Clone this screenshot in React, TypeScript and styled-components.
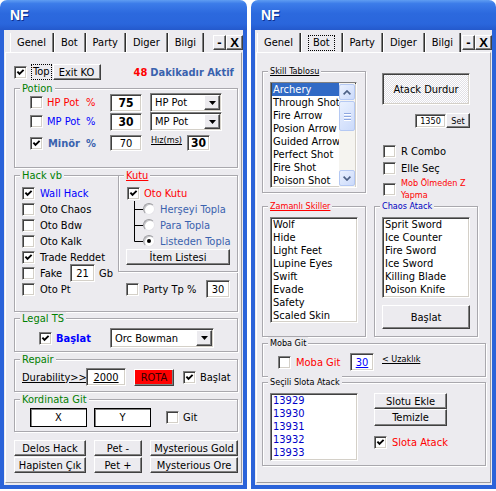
import styled, { createGlobalStyle } from "styled-components";

const FACE = "#ECEBEF";
const SANS = `"DejaVu Sans Condensed", "DejaVu Sans", "Liberation Sans", sans-serif`;

const GlobalStyle = createGlobalStyle`
  html, body { margin: 0; padding: 0; background: #fff; }
  body {
    font-family: ${SANS};
    font-stretch: condensed;
    font-size: 11px;
    color: #000;
  }
  *, *::before, *::after { box-sizing: border-box; }
`;

const Screen = styled.div`
  display: flex;
  gap: 4px;
  width: 496px;
  height: 491px;
`;

const Window = styled.div<{ $w: number }>`
  display: flex;
  flex-direction: column;
  width: ${(p) => p.$w}px;
  height: 489px;
`;

const TitleBar = styled.div`
  flex: none;
  height: 30px;
  display: flex;
  align-items: center;
  padding-left: 10px;
  border-radius: 7px 7px 0 0;
  background: linear-gradient(
    180deg,
    #5f9df2 0%,
    #3c7ce9 12%,
    #2c69de 45%,
    #2a66dc 80%,
    #2459cc 100%
  );
  color: #fff;
  font: bold 14px "Liberation Sans", Arial, sans-serif;
  text-shadow: 1px 1px 0 #10308c;
`;

const Body = styled.div`
  flex: 1;
  display: flex;
  flex-direction: column;
  background: ${FACE};
  border: 4px solid #2b63d9;
  border-top: 0;
`;

const TabStrip = styled.div<{ $lead: number }>`
  flex: none;
  display: flex;
  height: 19px;
  margin-top: 3px;
  padding-left: ${(p) => p.$lead}px;
`;

const Tab = styled.div`
  display: flex;
  align-items: center;
  padding: 0 7px 0 6px;
  border-left: 1px solid #fff;
  border-right: 1px solid #303030;
  box-shadow: inset -1px 0 0 #808080;
`;

const Focus = styled.span<{ $ml?: number; $pad?: number }>`
  flex: none;
  margin-left: ${(p) => p.$ml ?? 0}px;
  padding: 0 ${(p) => p.$pad ?? 1}px;
  line-height: 14px;
  border: 1px dotted #000;
`;

const WinButtons = styled.div`
  display: flex;
  height: 15px;
  margin: 2px 0 0 auto;
`;

const WinButton = styled.div<{ $w: number }>`
  width: ${(p) => p.$w}px;
  height: 15px;
  display: flex;
  align-items: center;
  justify-content: center;
  background: ${FACE};
  border: 1px solid;
  border-color: #fff #404040 #404040 #fff;
  box-shadow: inset -1px -1px 0 #808080;
  font: bold 13px "Liberation Sans", Arial, sans-serif;
`;

const Panel = styled.div<{ $pl: number; $pr: number }>`
  flex: 1;
  display: flex;
  flex-direction: column;
  margin: 0 1px 2px;
  padding: 0 ${(p) => p.$pr}px 0 ${(p) => p.$pl}px;
  border: 1px solid;
  border-color: #fff #9c9ba0 #9c9ba0 #fff;
`;

const Frame = styled.div<{ $h: number; $mt: number }>`
  flex: none;
  display: flex;
  flex-direction: column;
  height: ${(p) => p.$h}px;
  margin-top: ${(p) => p.$mt}px;
  border: 1px solid #a9a8ad;
  box-shadow: inset 1px 1px 0 #fff, 1px 1px 0 #fff;
`;

const HackFrame = styled(Frame)`
  display: grid;
  grid-template-columns: 1fr 119px;
  align-items: start;
`;

const HackList = styled.div`
  display: flex;
  flex-direction: column;
`;

const HackSide = styled.div`
  display: flex;
  flex-direction: column;
  margin: -1px -1px 0 0;
`;

const Legend = styled.span<{ $c?: string; $u?: boolean; $s?: number }>`
  align-self: flex-start;
  height: 13px;
  margin: -7px 0 0 5px;
  padding: 0 2px;
  line-height: 13px;
  font-size: ${(p) => p.$s ?? 11}px;
  color: ${(p) => p.$c ?? "#000"};
  text-decoration: ${(p) => (p.$u ? "underline" : "none")};
  background: ${FACE};
  white-space: nowrap;
`;

const Row = styled.div<{ $h: number; $mt?: number; $pl?: number; $pr?: number; $end?: boolean }>`
  flex: none;
  display: flex;
  align-items: center;
  justify-content: ${(p) => (p.$end ? "flex-end" : "flex-start")};
  height: ${(p) => p.$h}px;
  margin-top: ${(p) => p.$mt ?? 0}px;
  padding-left: ${(p) => p.$pl ?? 0}px;
  padding-right: ${(p) => p.$pr ?? 0}px;
`;

const Caption = styled.span<{
  $c?: string;
  $b?: boolean;
  $u?: boolean;
  $s?: number;
  $w?: number;
  $ml?: number;
  $top?: boolean;
  $lh?: number;
}>`
  flex: none;
  align-self: ${(p) => (p.$top ? "flex-start" : "center")};
  width: ${(p) => (p.$w ? `${p.$w}px` : "auto")};
  margin-left: ${(p) => p.$ml ?? 0}px;
  line-height: ${(p) => p.$lh ?? 13}px;
  font-size: ${(p) => p.$s ?? 11}px;
  font-weight: ${(p) => (p.$b ? "bold" : "normal")};
  color: ${(p) => p.$c ?? "#000"};
  text-decoration: ${(p) => (p.$u ? "underline" : "none")};
  white-space: nowrap;
`;

const Spacer = styled.span`
  flex: 1;
`;

const Sunken = `
  background: #fff;
  border: 1px solid;
  border-color: #808080 #fff #fff #808080;
  box-shadow: inset 1px 1px 0 #404040, inset -1px -1px 0 #d4d0c8;
`;

const Field = styled.div<{
  $w: number;
  $h: number;
  $ml?: number;
  $mr?: number;
  $b?: boolean;
  $u?: boolean;
  $c?: string;
  $s?: number;
}>`
  flex: none;
  display: flex;
  align-items: center;
  justify-content: center;
  width: ${(p) => p.$w}px;
  height: ${(p) => p.$h}px;
  margin-left: ${(p) => p.$ml ?? 0}px;
  margin-right: ${(p) => p.$mr ?? 0}px;
  ${Sunken}
  font-size: ${(p) => p.$s ?? (p.$b ? 12 : 11)}px;
  font-weight: ${(p) => (p.$b ? "bold" : "normal")};
  color: ${(p) => p.$c ?? "#000"};
  text-decoration: ${(p) => (p.$u ? "underline" : "none")};
`;

const CoordBox = styled.div<{ $ml?: number }>`
  flex: none;
  display: flex;
  align-items: center;
  justify-content: center;
  width: 57px;
  height: 19px;
  margin-left: ${(p) => p.$ml ?? 0}px;
  background: #fff;
  border: 1px solid #000;
  box-shadow: inset 1px 1px 0 #808080;
`;

const ComboBox = styled.div<{ $w: number; $h: number; $ml?: number }>`
  flex: none;
  display: flex;
  width: ${(p) => p.$w}px;
  height: ${(p) => p.$h}px;
  margin-left: ${(p) => p.$ml ?? 0}px;
  ${Sunken}
`;

const ComboText = styled.span`
  flex: 1;
  display: flex;
  align-items: center;
  padding-left: 4px;
`;

const DropButton = styled.span`
  flex: none;
  display: flex;
  align-items: center;
  justify-content: center;
  width: 16px;
  margin: 1px;
  background: ${FACE};
  border: 1px solid;
  border-color: #fff #404040 #404040 #fff;
  box-shadow: inset -1px -1px 0 #808080;
`;

const Btn = styled.button<{
  $w: number;
  $h: number;
  $ml?: number;
  $mt?: number;
  $bg?: string;
  $c?: string;
  $s?: number;
}>`
  flex: none;
  display: flex;
  align-items: center;
  justify-content: center;
  width: ${(p) => p.$w}px;
  height: ${(p) => p.$h}px;
  margin: ${(p) => p.$mt ?? 0}px 0 0 ${(p) => p.$ml ?? 0}px;
  padding: 0;
  font-family: inherit;
  font-stretch: condensed;
  font-size: ${(p) => p.$s ?? 11}px;
  color: ${(p) => p.$c ?? "#000"};
  background: ${(p) => p.$bg ?? FACE};
  border: 1px solid;
  border-color: #fff #404040 #404040 #fff;
  box-shadow: inset -1px -1px 0 #808080;
  white-space: nowrap;
`;

const ToggleBtn = styled.div`
  flex: none;
  display: flex;
  align-items: center;
  justify-content: center;
  width: 88px;
  height: 32px;
  margin: 20px 0 0 8px;
  border: 1px solid;
  border-color: #808080 #fff #fff #808080;
  box-shadow: inset 1px 1px 0 #404040, inset -1px -1px 0 #d4d0c8;
  background: repeating-conic-gradient(#fff 0% 25%, #e1e0e6 0% 50%) 0 0 / 2px 2px;
`;

const ButtonGrid = styled.div`
  display: grid;
  grid-template-columns: 72px 48px 88px;
  grid-auto-rows: 16px;
  column-gap: 8px;
  row-gap: 1px;
  margin-top: 8px;
`;

const CheckBox = styled.span<{ $ml?: number }>`
  flex: none;
  display: flex;
  align-items: center;
  justify-content: center;
  width: 13px;
  height: 13px;
  margin-left: ${(p) => p.$ml ?? 0}px;
  ${Sunken}
`;

const Check = ({ on, ml }: { on?: boolean; ml?: number }) => (
  <CheckBox $ml={ml}>
    {on && (
      <svg width="9" height="9" viewBox="0 0 9 9">
        <path d="M1.4 3.6 L3.5 5.9 L7.6 1.8" fill="none" stroke="#000" strokeWidth="1.9" />
      </svg>
    )}
  </CheckBox>
);

const RadioDot = styled.span<{ $on?: boolean }>`
  flex: none;
  display: flex;
  align-items: center;
  justify-content: center;
  width: 12px;
  height: 12px;
  border-radius: 50%;
  background: #fff;
  border: 1px solid;
  border-color: #9a9a9e #e6e5ea #e6e5ea #9a9a9e;
  box-shadow: inset 1px 1px 0 #c4c4c8;
  &::after {
    content: "";
    width: 4px;
    height: 4px;
    border-radius: 50%;
    background: ${(p) => (p.$on ? "#000" : "transparent")};
  }
`;

const TreeLink = ({ last }: { last?: boolean }) => (
  <svg width="16" height="16" viewBox="0 0 16 16" style={{ flex: "none" }}>
    <path
      d={last ? "M7.5 0 V8.5 H16" : "M7.5 0 V16 M7.5 8.5 H16"}
      fill="none"
      stroke="#000"
      strokeWidth="1"
    />
  </svg>
);

const ListBox = styled.div<{ $w: number; $h: number; $mt?: number; $ml?: number }>`
  flex: none;
  display: flex;
  width: ${(p) => p.$w}px;
  height: ${(p) => p.$h}px;
  margin-top: ${(p) => p.$mt ?? 0}px;
  margin-left: ${(p) => p.$ml ?? 0}px;
  padding: 0 1px 0 1px;
  ${Sunken}
`;

const ListItems = styled.div`
  flex: 1;
  display: flex;
  flex-direction: column;
  overflow: hidden;
`;

const ListItem = styled.div<{ $sel?: boolean; $c?: string }>`
  flex: none;
  height: 13px;
  padding-left: 1px;
  line-height: 13px;
  white-space: nowrap;
  color: ${(p) => (p.$sel ? "#fff" : p.$c ?? "#000")};
  background: ${(p) => (p.$sel ? "#316ac5" : "transparent")};
`;

const ScrollBar = styled.div`
  flex: none;
  display: flex;
  flex-direction: column;
  width: 16px;
  padding: 1px 0;
  background: #f5f4f0;
`;

const ScrollPart = styled.div<{ $h: number; $mt?: number }>`
  flex: none;
  display: flex;
  flex-direction: column;
  align-items: center;
  justify-content: center;
  gap: 2px;
  height: ${(p) => p.$h}px;
  margin-top: ${(p) => p.$mt ?? 0}px;
  border: 1px solid #b5c9f3;
  border-radius: 2px;
  background: linear-gradient(135deg, #eaf1fe 0%, #cbdafb 100%);
`;

const Grip = styled.span`
  width: 7px;
  height: 1px;
  background: #8fa8e0;
  box-shadow: 0 1px 0 #fff;
`;

const Chevron = ({ down }: { down?: boolean }) => (
  <svg width="8" height="5" viewBox="0 0 8 5">
    <path
      d={down ? "M0.6 0.6 L4 4 L7.4 0.6" : "M0.6 4.4 L4 1 L7.4 4.4"}
      fill="none"
      stroke="#4d6185"
      strokeWidth="1.7"
    />
  </svg>
);

const DropArrow = () => (
  <svg width="7" height="4" viewBox="0 0 7 4">
    <path d="M0 0 H7 L3.5 4 Z" fill="#000" />
  </svg>
);

const Combo = ({ w, h, ml, text }: { w: number; h: number; ml?: number; text: string }) => (
  <ComboBox $w={w} $h={h} $ml={ml}>
    <ComboText>{text}</ComboText>
    <DropButton>
      <DropArrow />
    </DropButton>
  </ComboBox>
);

const TopArea = styled.div`
  flex: none;
  display: flex;
  gap: 8px;
  align-items: flex-start;
`;

const Column = styled.div`
  flex: none;
  display: flex;
  flex-direction: column;
  width: 104px;
`;

const SlotRow = styled.div`
  display: flex;
  align-items: flex-start;
  margin-top: 4px;
  padding-left: 7px;
`;

const SlotSide = styled.div`
  display: flex;
  flex-direction: column;
  margin-left: 16px;
`;

const STEEL = "#3a62ae";

const hackItems: { label: string; on?: boolean; color?: string }[] = [
  { label: "Wall Hack", on: true, color: "#0000ff" },
  { label: "Oto Chaos" },
  { label: "Oto Bdw" },
  { label: "Oto Kalk" },
  { label: "Trade Reddet", on: true },
];

const collect = ["Herşeyi Topla", "Para Topla", "Listeden Topla"];

const skills = [
  "Archery",
  "Through Shot",
  "Fire Arrow",
  "Posion Arrow",
  "Guided Arrow",
  "Perfect Shot",
  "Fire Shot",
  "Poison Shot",
];

const timed = ["Wolf", "Hide", "Light Feet", "Lupine Eyes", "Swift", "Evade", "Safety", "Scaled Skin"];

const chaos = ["Sprit Sword", "Ice Counter", "Fire Sword", "Ice Sword", "Killing Blade", "Poison Knife"];

const slots = ["13929", "13930", "13931", "13932", "13933"];

const Tabs = ({ lead, active }: { lead: number; active: string }) => (
  <TabStrip $lead={lead}>
    {["Genel", "Bot", "Party", "Diger", "Bilgi"].map((t) => (
      <Tab key={t}>{t === active && t !== "Genel" ? <Focus $pad={4}>{t}</Focus> : t}</Tab>
    ))}
    <WinButtons>
      <WinButton $w={13}>-</WinButton>
      <WinButton $w={17}>X</WinButton>
    </WinButtons>
  </TabStrip>
);

const GenelWindow = () => (
  <Window $w={247}>
    <TitleBar>NF</TitleBar>
    <Body>
      <Tabs lead={6} active="Genel" />
      <Panel $pl={8} $pr={3}>
        <Row $h={16} $mt={11}>
          <Check on />
          <Focus $ml={4}>Top</Focus>
          <Btn $w={48} $h={16} $ml={1}>
            Exit KO
          </Btn>
          <Caption $c="#f00" $b $ml={33}>
            48
          </Caption>
          <Caption $c={STEEL} $b $ml={3}>
            Dakikadır Aktif
          </Caption>
        </Row>

        <Frame $h={80} $mt={8}>
          <Legend $c="#008000">Potion</Legend>
          <Row $h={19} $mt={-2} $pl={15}>
            <Check />
            <Caption $c="#f00" $ml={4} $w={39}>
              HP Pot
            </Caption>
            <Caption $c="#f00" $w={24}>
              %
            </Caption>
            <Field $w={32} $h={18} $b>
              75
            </Field>
            <Combo w={72} h={19} ml={8} text="HP Pot" />
          </Row>
          <Row $h={19} $pl={15}>
            <Check />
            <Caption $c="#0000ff" $ml={4} $w={39}>
              MP Pot
            </Caption>
            <Caption $c="#0000ff" $w={24}>
              %
            </Caption>
            <Field $w={32} $h={18} $b>
              30
            </Field>
            <Combo w={72} h={19} ml={8} text="MP Pot" />
          </Row>
          <Row $h={16} $mt={4} $pl={15}>
            <Check on />
            <Caption $c={STEEL} $b $ml={5} $w={38}>
              Minör
            </Caption>
            <Caption $c={STEEL} $b $w={24}>
              %
            </Caption>
            <Field $w={32} $h={16}>
              70
            </Field>
            <Caption $s={9} $u $ml={9} $top $lh={11}>
              Hız(ms)
            </Caption>
            <Field $w={23} $h={16} $ml={5} $b>
              30
            </Field>
          </Row>
        </Frame>

        <HackFrame $h={137} $mt={7}>
          <HackList>
            <Legend $c="#008000">Hack vb</Legend>
            <Row $h={16} $mt={3} $pl={7}>
              <Check on={hackItems[0].on} />
              <Caption $c={hackItems[0].color} $ml={5}>
                {hackItems[0].label}
              </Caption>
            </Row>
            {hackItems.slice(1).map((it) => (
              <Row key={it.label} $h={16} $pl={7}>
                <Check on={it.on} />
                <Caption $c={it.color} $ml={5}>
                  {it.label}
                </Caption>
              </Row>
            ))}
            <Row $h={16} $pl={7}>
              <Check />
              <Caption $ml={5} $w={30}>
                Fake
              </Caption>
              <Field $w={25} $h={18}>
                21
              </Field>
              <Caption $ml={4}>Gb</Caption>
            </Row>
            <Row $h={16} $pl={7}>
              <Check />
              <Caption $ml={5}>Oto Pt</Caption>
            </Row>
          </HackList>
          <HackSide>
            <Frame $h={97} $mt={0}>
              <Legend $c="#f00" $u>
                Kutu
              </Legend>
              <Row $h={16} $mt={3} $pl={8}>
                <Check on />
                <Caption $c="#f00" $ml={4}>
                  Oto Kutu
                </Caption>
              </Row>
              {collect.map((c, i) => (
                <Row key={c} $h={16} $pl={8}>
                  <TreeLink last={i === collect.length - 1} />
                  <RadioDot $on={i === collect.length - 1} />
                  <Caption $c={STEEL} $ml={5}>
                    {c}
                  </Caption>
                </Row>
              ))}
              <Btn $w={104} $h={16} $ml={7}>
                İtem Listesi
              </Btn>
            </Frame>
            <Row $h={18} $mt={8} $pl={8} $pr={8}>
              <Check />
              <Caption $ml={4}>Party Tp %</Caption>
              <Spacer />
              <Field $w={24} $h={18}>
                30
              </Field>
            </Row>
          </HackSide>
        </HackFrame>

        <Frame $h={34} $mt={6}>
          <Legend $c="#008000">Legal TS</Legend>
          <Row $h={20} $mt={3} $pl={24}>
            <Check on />
            <Caption $c="#0000ff" $b $ml={4} $w={54}>
              Başlat
            </Caption>
            <Combo w={104} h={20} text="Orc Bowman" />
          </Row>
        </Frame>

        <Frame $h={33} $mt={7}>
          <Legend $c="#008000">Repair</Legend>
          <Row $h={18} $mt={2} $pl={7}>
            <Caption $u $w={64}>
              Durability&gt;&gt;
            </Caption>
            <Field $w={40} $h={18} $u>
              2000
            </Field>
            <Btn $w={40} $h={17} $ml={8} $bg="#ff0000" $c="#300000">
              ROTA
            </Btn>
            <Check on ml={9} />
            <Caption $ml={4}>Başlat</Caption>
          </Row>
        </Frame>

        <Frame $h={33} $mt={7}>
          <Legend $c="#008000">Kordinata Git</Legend>
          <Row $h={19} $mt={2} $pl={15}>
            <CoordBox>X</CoordBox>
            <CoordBox $ml={7}>Y</CoordBox>
            <Check ml={15} />
            <Caption $ml={4}>Git</Caption>
          </Row>
        </Frame>

        <ButtonGrid>
          <Btn $w={72} $h={16}>
            Delos Hack
          </Btn>
          <Btn $w={48} $h={16}>
            Pet -
          </Btn>
          <Btn $w={88} $h={16}>
            Mysterious Gold
          </Btn>
          <Btn $w={72} $h={16}>
            Hapisten Çık
          </Btn>
          <Btn $w={48} $h={16}>
            Pet +
          </Btn>
          <Btn $w={88} $h={16}>
            Mysterious Ore
          </Btn>
        </ButtonGrid>
      </Panel>
    </Body>
  </Window>
);

const BotWindow = () => (
  <Window $w={245}>
    <TitleBar>NF</TitleBar>
    <Body>
      <Tabs lead={2} active="Bot" />
      <Panel $pl={5} $pr={4}>
        <TopArea>
          <Column>
            <Frame $h={122} $mt={18}>
              <Legend $s={9} $u>
                Skill Tablosu
              </Legend>
              <ListBox $w={87} $h={106} $mt={4} $ml={7}>
                <ListItems>
                  {skills.map((s, i) => (
                    <ListItem key={s} $sel={i === 0}>
                      {s}
                    </ListItem>
                  ))}
                </ListItems>
                <ScrollBar>
                  <ScrollPart $h={16}>
                    <Chevron />
                  </ScrollPart>
                  <ScrollPart $h={30} $mt={1}>
                    <Grip />
                    <Grip />
                    <Grip />
                  </ScrollPart>
                  <Spacer />
                  <ScrollPart $h={16}>
                    <Chevron down />
                  </ScrollPart>
                </ScrollBar>
              </ListBox>
            </Frame>
            <Frame $h={131} $mt={13}>
              <Legend $s={9} $u $c="#f00">
                Zamanlı Skiller
              </Legend>
              <ListBox $w={88} $h={106} $mt={4} $ml={7}>
                <ListItems>
                  {timed.map((s) => (
                    <ListItem key={s}>{s}</ListItem>
                  ))}
                </ListItems>
              </ListBox>
            </Frame>
          </Column>
          <Column>
            <ToggleBtn>Atack Durdur</ToggleBtn>
            <Row $h={15} $mt={8} $pr={8} $end>
              <Field $w={31} $h={14} $s={9}>
                1350
              </Field>
              <Btn $w={24} $h={15} $s={9}>
                Set
              </Btn>
            </Row>
            <Row $h={13} $mt={17} $pl={9}>
              <Check />
              <Caption $ml={5}>R Combo</Caption>
            </Row>
            <Row $h={13} $mt={4} $pl={9}>
              <Check />
              <Caption $ml={5}>Elle Seç</Caption>
            </Row>
            <Row $h={24} $mt={2} $pl={9}>
              <Check />
              <Caption $ml={5} $c="#f00" $s={9} $lh={12}>
                Mob Ölmeden Z
                <br />
                Yapma
              </Caption>
            </Row>
            <Frame $h={131} $mt={5}>
              <Legend $s={9} $c="#0000c0">
                Chaos Atack
              </Legend>
              <ListBox $w={88} $h={81} $mt={4} $ml={7}>
                <ListItems>
                  {chaos.map((s) => (
                    <ListItem key={s}>{s}</ListItem>
                  ))}
                </ListItems>
              </ListBox>
              <Btn $w={88} $h={24} $mt={7} $ml={7}>
                Başlat
              </Btn>
            </Frame>
          </Column>
        </TopArea>

        <Frame $h={34} $mt={6}>
          <Legend $s={9}>Moba Git</Legend>
          <Row $h={18} $mt={3} $pl={15}>
            <Check />
            <Caption $c="#f00" $ml={5} $w={54}>
              Moba Git
            </Caption>
            <Field $w={24} $h={18} $u $c="#0000ff">
              30
            </Field>
            <Caption $s={9} $u $ml={8} $top>
              &lt; Uzaklık
            </Caption>
          </Row>
        </Frame>

        <Frame $h={84} $mt={5}>
          <Legend $s={9}>Seçili Slota Atack</Legend>
          <SlotRow>
            <ListBox $w={88} $h={68}>
              <ListItems>
                {slots.map((s) => (
                  <ListItem key={s} $c="#0000c8">
                    {s}
                  </ListItem>
                ))}
              </ListItems>
            </ListBox>
            <SlotSide>
              <Btn $w={73} $h={16}>
                Slotu Ekle
              </Btn>
              <Btn $w={73} $h={17}>
                Temizle
              </Btn>
              <Row $h={13} $mt={10}>
                <Check on />
                <Caption $c="#f00" $ml={5}>
                  Slota Atack
                </Caption>
              </Row>
            </SlotSide>
          </SlotRow>
        </Frame>
      </Panel>
    </Body>
  </Window>
);

const App = () => (
  <>
    <GlobalStyle />
    <Screen>
      <GenelWindow />
      <BotWindow />
    </Screen>
  </>
);

export default App;
